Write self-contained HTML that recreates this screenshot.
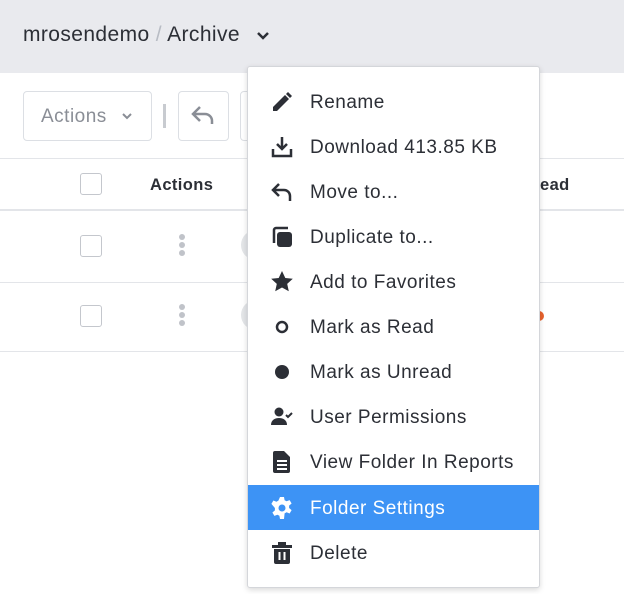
<!DOCTYPE html>
<html><head><style>
body{margin:0;width:624px;height:594px;overflow:hidden;background:#fff;font-family:"Liberation Sans",sans-serif;position:relative}
.hdr{position:absolute;left:0;top:0;width:624px;height:73px;background:#e9eaee}
.crumb{position:absolute;left:23px;top:23px;font-size:21px;letter-spacing:0.4px;color:#2c2f36}
.crumb .s{color:#b8bcc4}
.abs{position:absolute}
.btn{position:absolute;border:1px solid #dcdfe4;border-radius:4px;background:#fff}
.line{position:absolute;left:0;width:624px;height:1px;background:#e3e5e9}
.cb{position:absolute;width:22px;height:22px;border:1.5px solid #c4c7cd;border-radius:3px;box-sizing:border-box;background:#fff}
.dots{position:absolute;width:6px}
.dots i{display:block;width:6px;height:6px;border-radius:3px;background:#c0c3c9;margin-bottom:2px}
.menu{position:absolute;left:247px;top:66px;width:291px;height:520px;background:#fff;border:1px solid #d4d6da;border-radius:3px;box-shadow:0 2px 6px rgba(0,0,0,.15)}
.it{position:absolute;left:0;width:291px;height:45px;font-size:19px;letter-spacing:0.5px;color:#2c2f36;line-height:47px}
.it span{position:absolute;left:62px}
.it svg{position:absolute;left:22px;top:11px}
.hl{background:#3d93f5;color:#fff}
</style></head><body>
<div class="hdr"></div>
<div class="crumb">mrosendemo <span class="s">/</span> Archive</div>
<svg class="abs" style="left:256px;top:31px" width="14" height="10" viewBox="0 0 14 10"><path d="M2 2l5 5 5-5" fill="none" stroke="#2c2f36" stroke-width="2.5"/></svg>
<div class="btn" style="left:23px;top:91px;width:127px;height:48px"></div>
<div class="abs" style="left:41px;top:106px;font-size:19px;letter-spacing:0.5px;color:#8a8e96">Actions</div>
<svg class="abs" style="left:121px;top:112px" width="12" height="9" viewBox="0 0 12 9"><path d="M2 2l4 4 4-4" fill="none" stroke="#8a8e96" stroke-width="2"/></svg>
<div class="abs" style="left:163px;top:104px;width:3px;height:24px;background:#c8cbd0"></div>
<div class="btn" style="left:178px;top:91px;width:49px;height:48px"></div>
<svg class="abs" style="left:190px;top:104px" width="26" height="22" viewBox="0 0 26 22"><path d="M10 3L3 10l7 7M3 10h12a7 7 0 0 1 7 7v3" fill="none" stroke="#8a8e96" stroke-width="2.5"/></svg>
<div class="btn" style="left:240px;top:91px;width:49px;height:48px"></div>
<div class="line" style="top:158px"></div>
<div class="line" style="top:209px;height:2px"></div>
<div class="line" style="top:282px"></div>
<div class="line" style="top:351px"></div>
<div class="cb" style="left:80px;top:173px"></div>
<div class="abs" style="left:150px;top:176px;font-size:16.5px;letter-spacing:0.4px;font-weight:bold;color:#2c2f36">Actions</div>
<div class="abs" style="left:540px;top:176px;font-size:16.5px;letter-spacing:0.4px;font-weight:bold;color:#2c2f36">ead</div>
<div class="cb" style="left:80px;top:235px"></div>
<div class="cb" style="left:80px;top:305px"></div>
<div class="dots" style="left:179px;top:234px"><i></i><i></i><i></i></div>
<div class="dots" style="left:179px;top:304px"><i></i><i></i><i></i></div>
<div class="abs" style="left:241px;top:230px;width:30px;height:30px;border-radius:15px;background:#e3e5e8"></div>
<div class="abs" style="left:241px;top:300px;width:30px;height:30px;border-radius:15px;background:#e3e5e8"></div>
<div class="abs" style="left:534px;top:311px;width:10px;height:10px;border-radius:5px;background:#e8622d"></div>
<div class="menu">
<div class="it" style="top:12px"><svg width="24" height="24" viewBox="0 0 24 24"><path d="M3 21v-4L15 5l4 4L7 21zM16 4l2-2 4 4-2 2z" fill="#2c2f36"/></svg><span>Rename</span></div>
<div class="it" style="top:57px"><svg width="24" height="24" viewBox="0 0 24 24"><path d="M12 2v12M7 9l5 5 5-5M3 14v7h18v-7" fill="none" stroke="#2c2f36" stroke-width="2.5"/></svg><span>Download 413.85 KB</span></div>
<div class="it" style="top:102px"><svg width="24" height="24" viewBox="0 0 24 24"><path d="M9 4L3 10l6 6M3 10h11a6 6 0 0 1 6 6v5" fill="none" stroke="#2c2f36" stroke-width="2.5"/></svg><span>Move to...</span></div>
<div class="it" style="top:147px"><svg width="24" height="24" viewBox="0 0 24 24"><path d="M4 18V5a2 2 0 0 1 2-2h12" fill="none" stroke="#2c2f36" stroke-width="2.5"/><rect x="7" y="7" width="15" height="15" rx="3" fill="#2c2f36"/></svg><span>Duplicate to...</span></div>
<div class="it" style="top:192px"><svg width="24" height="24" viewBox="0 0 24 24"><path d="M12 1l3.3 7 7.5.8-5.6 5.1 1.6 7.4L12 17.5 5.2 21.3l1.6-7.4L1.2 8.8 8.7 8z" fill="#2c2f36"/></svg><span>Add to Favorites</span></div>
<div class="it" style="top:237px"><svg width="24" height="24" viewBox="0 0 24 24"><circle cx="12" cy="12" r="5" fill="none" stroke="#2c2f36" stroke-width="2.5"/></svg><span>Mark as Read</span></div>
<div class="it" style="top:282px"><svg width="24" height="24" viewBox="0 0 24 24"><circle cx="12" cy="12" r="7" fill="#2c2f36"/></svg><span>Mark as Unread</span></div>
<div class="it" style="top:327px"><svg width="24" height="24" viewBox="0 0 24 24"><circle cx="9" cy="7" r="4.5" fill="#2c2f36"/><path d="M1 20c0-5 4-7 8-7s8 2 8 7z" fill="#2c2f36"/><path d="M16 10l2 2 4-4" fill="none" stroke="#2c2f36" stroke-width="2"/></svg><span>User Permissions</span></div>
<div class="it" style="top:372px"><svg width="24" height="24" viewBox="0 0 24 24"><path d="M5 1h9l6 6v14a2 2 0 0 1-2 2H5a2 2 0 0 1-2-2V3a2 2 0 0 1 2-2z" fill="#2c2f36"/><path d="M7 11h10M7 15h10M7 19h10" stroke="#fff" stroke-width="2"/></svg><span>View Folder In Reports</span></div>
<div class="it hl" style="top:418px;left:0"><svg width="24" height="24" viewBox="0 0 24 24"><path d="M10 1h4l.6 3.2 2 1.1 3-1.2 2 3.4-2.5 2.1v2.4l2.5 2.1-2 3.4-3-1.2-2 1.1L14 23h-4l-.6-3.2-2-1.1-3 1.2-2-3.4 2.5-2.1v-2.4L1.4 7.9l2-3.4 3 1.2 2-1.1z" fill="#fff"/><circle cx="12" cy="12" r="3.5" fill="#3d93f5"/></svg><span>Folder Settings</span></div>
<div class="it" style="top:463px"><svg width="24" height="24" viewBox="0 0 24 24"><path d="M2 4h20v3H2zM8 1h8v3H8zM4 8h16v13a2 2 0 0 1-2 2H6a2 2 0 0 1-2-2z" fill="#2c2f36"/><path d="M9.5 11v8M14.5 11v8" stroke="#fff" stroke-width="2"/></svg><span>Delete</span></div>
</div>
</body></html>
